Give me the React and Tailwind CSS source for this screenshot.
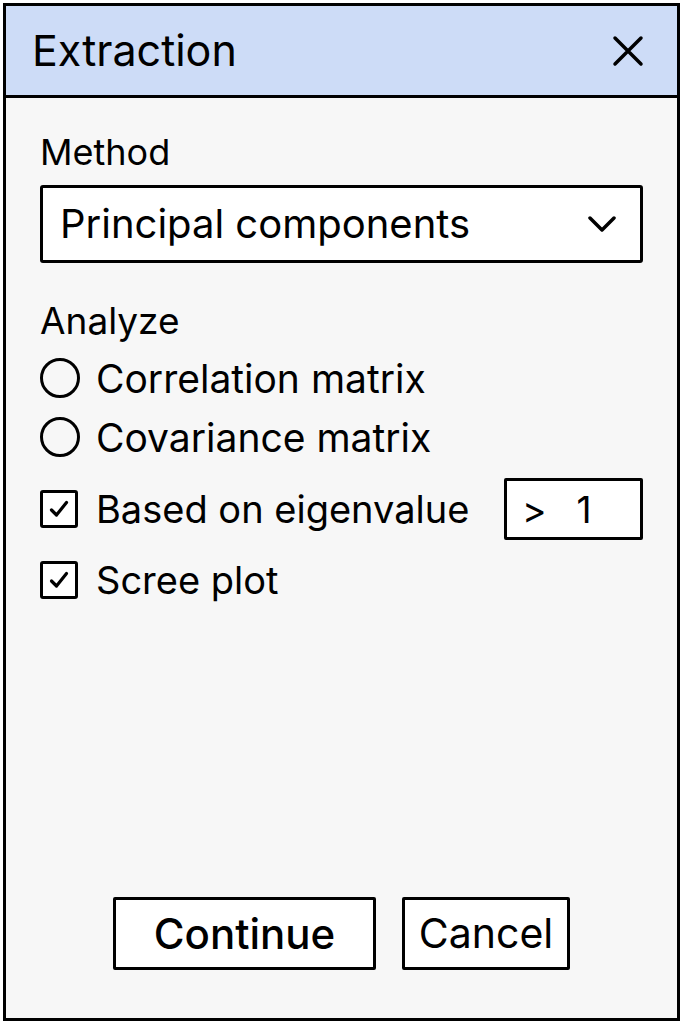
import React, { useState } from 'react'

const Radio = ({ checked, label, onClick }) => (
  <button onClick={onClick} className="flex items-center gap-[16px] h-[40px] text-left">
    <span className="w-[40px] h-[40px] rounded-full border-[3.5px] border-black flex items-center justify-center shrink-0">
      {checked && <span className="w-[20px] h-[20px] rounded-full bg-black"></span>}
    </span>
    <span className="text-[39px] leading-none">{label}</span>
  </button>
)

const Checkbox = ({ checked, label, onClick }) => (
  <button onClick={onClick} className="flex items-center gap-[18px] h-[40px] text-left">
    <span className="w-[38px] h-[38px] rounded-[3px] border-[3.5px] border-black bg-white flex items-center justify-center shrink-0">
      {checked && (
        <svg width="22" height="22" viewBox="0 0 22 22" fill="none">
          <path d="M3.5 12 L8.5 17 L18.5 4.5" stroke="black" strokeWidth="3.2" strokeLinecap="round" strokeLinejoin="round" />
        </svg>
      )}
    </span>
    <span className="text-[38px] leading-none">{label}</span>
  </button>
)

export default function App() {
  const [matrix, setMatrix] = useState(null)
  const [eigen, setEigen] = useState(true)
  const [scree, setScree] = useState(true)

  return (
    <div className="w-[683px] h-[1024px] bg-white p-[3px] font-['Inter','Liberation_Sans',sans-serif] text-black">
      <div className="h-[1018px] w-[677px] border-[3px] border-black bg-[#f7f7f7] flex flex-col">
        {/* Header */}
        <div className="h-[92px] bg-[#cddcf7] border-b-[3px] border-black flex items-center justify-between pl-[26px] pr-[33px] shrink-0">
          <span className="text-[43px] leading-none">Extraction</span>
          <button className="w-[32px] h-[32px] flex items-center justify-center">
            <svg width="32" height="32" viewBox="0 0 32 32" fill="none">
              <path d="M3 3 L29 29 M29 3 L3 29" stroke="black" strokeWidth="3.5" strokeLinecap="round" />
            </svg>
          </button>
        </div>

        {/* Body */}
        <div className="flex-1 flex flex-col px-[34px]">
          <div className="mt-[36px] text-[36px] leading-none">Method</div>
          <button className="mt-[15px] h-[78px] w-full border-[3px] border-black rounded-[3px] bg-white flex items-center justify-between pl-[17px] pr-[24px]">
            <span className="text-[40px] leading-none">Principal components</span>
            <svg width="28" height="18" viewBox="0 0 28 18" fill="none">
              <path d="M2 3 L14 15 L26 3" stroke="black" strokeWidth="3.5" strokeLinecap="round" strokeLinejoin="round" />
            </svg>
          </button>

          <div className="mt-[39px] text-[37px] leading-none">Analyze</div>
          <div className="mt-[19px] flex flex-col gap-[19px]">
            <Radio label="Correlation matrix" checked={matrix === 'corr'} onClick={() => setMatrix('corr')} />
            <Radio label="Covariance matrix" checked={matrix === 'cov'} onClick={() => setMatrix('cov')} />
          </div>
          <div className="mt-[21px] flex items-center justify-between">
            <Checkbox label="Based on eigenvalue" checked={eigen} onClick={() => setEigen(!eigen)} />
            <div className="w-[139px] h-[62px] border-[3px] border-black rounded-[2px] bg-white flex items-center pl-[15px] gap-[30px] text-[37px] leading-none">
              <span>&gt;</span>
              <span>1</span>
            </div>
          </div>
          <div className="mt-[20px]">
            <Checkbox label="Scree plot" checked={scree} onClick={() => setScree(!scree)} />
          </div>

          <div className="mt-auto mb-[48px] flex justify-center gap-[26px]">
            <button className="w-[263px] h-[73px] border-[3px] border-black rounded-[2px] bg-white text-[42px] font-medium leading-none">
              Continue
            </button>
            <button className="w-[168px] h-[73px] border-[3px] border-black rounded-[2px] bg-white text-[41px] leading-none">
              Cancel
            </button>
          </div>
        </div>
      </div>
    </div>
  )
}
